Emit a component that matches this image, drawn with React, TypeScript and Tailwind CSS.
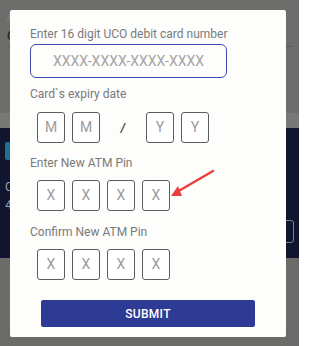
import React from "react";

const Box = ({ ch }: { ch: string }) => (
  <div className="w-[28px] h-[31px] rounded-[3px] border border-[#5c5c5c] flex items-center justify-center text-[14px] text-[#9b9b9b] bg-white">
    {ch}
  </div>
);

export default function App() {
  return (
    <div
      className="relative w-[299px] h-[346px] overflow-hidden bg-[#6b6b69]"
      style={{ fontFamily: "Roboto, 'Liberation Sans', sans-serif" }}
    >
      {/* background page (dimmed) */}
      <div className="flex flex-col">
        <div className="h-[113px] bg-[#6d6d6b] relative px-[7px] pt-[13px]">
          <div className="text-[9px] leading-[10px] text-[#8a8a88]">A</div>
          <div className="mt-[7px] text-[12px] leading-[12px] font-semibold text-[#2a2a2a]">C</div>
          <div className="mt-[4px] h-px bg-[#5a5a58] w-full" />
        </div>
        <div className="h-[15px] bg-[#787876]" />
        <div className="h-[130px] bg-[#11152f] px-[5px] pt-[14px] flex flex-col">
          <div className="w-[6px] h-[18px] bg-[#1f6f8f] rounded-[2px]" />
          <div className="mt-[20px] text-[12px] leading-[14px] text-[#9aa0b0]">C</div>
          <div className="mt-[4px] text-[13px] leading-[14px] text-[#9aa0b0]">4</div>
          <div className="self-end mt-[8px] w-[14px] h-[23px] border border-[#7c8090] rounded-[3px]" />
        </div>
        <div className="flex-1 bg-[#6b6b69]" />
      </div>

      {/* modal */}
      <div className="absolute left-[10px] top-[10px] w-[276px] h-[327px] bg-[#fdfdfc] rounded-[2px] px-[20px] pt-[16px]">
        <div className="text-[12px] leading-[16px] text-[#7a7a7a]">Enter 16 digit UCO debit card number</div>
        <div className="mt-[2px] w-[197px] h-[34px] rounded-[6px] border-[1.5px] border-[#3c4fb0] flex items-center justify-center text-[14px] text-[#a3a3a3]">
          XXXX-XXXX-XXXX-XXXX
        </div>

        <div className="mt-[8px] text-[12px] leading-[16px] text-[#7a7a7a]">Card`s expiry date</div>
        <div className="mt-[10px] pl-[7px] flex items-center">
          <Box ch="M" />
          <div className="ml-[7px]">
            <Box ch="M" />
          </div>
          <div className="w-[46px] flex justify-center text-[12px] font-bold italic text-[#444]">/</div>
          <Box ch="Y" />
          <div className="ml-[7px]">
            <Box ch="Y" />
          </div>
        </div>

        <div className="mt-[12px] text-[12px] leading-[16px] text-[#7a7a7a]">Enter New ATM Pin</div>
        <div className="mt-[9px] pl-[7px] flex gap-[7px]">
          <Box ch="X" />
          <Box ch="X" />
          <Box ch="X" />
          <Box ch="X" />
        </div>

        <div className="mt-[13px] text-[12px] leading-[16px] text-[#7a7a7a]">Confirm New ATM Pin</div>
        <div className="mt-[9px] pl-[7px] flex gap-[7px]">
          <Box ch="X" />
          <Box ch="X" />
          <Box ch="X" />
          <Box ch="X" />
        </div>

        <div className="mt-[20px] ml-[11px] w-[214px] h-[27px] rounded-[2px] bg-[#2d3b94] flex items-center justify-center text-[12px] font-medium text-white tracking-[0.3px]">
          SUBMIT
        </div>

        {/* red arrow */}
        <svg className="absolute left-0 top-0" width="276" height="327" viewBox="0 0 276 327">
          <line x1="203" y1="161" x2="167" y2="182" stroke="#e8403a" strokeWidth="2.5" strokeLinecap="round" />
          <polygon points="161,186 168,176 172,186" fill="#e8403a" />
        </svg>
      </div>
    </div>
  );
}
